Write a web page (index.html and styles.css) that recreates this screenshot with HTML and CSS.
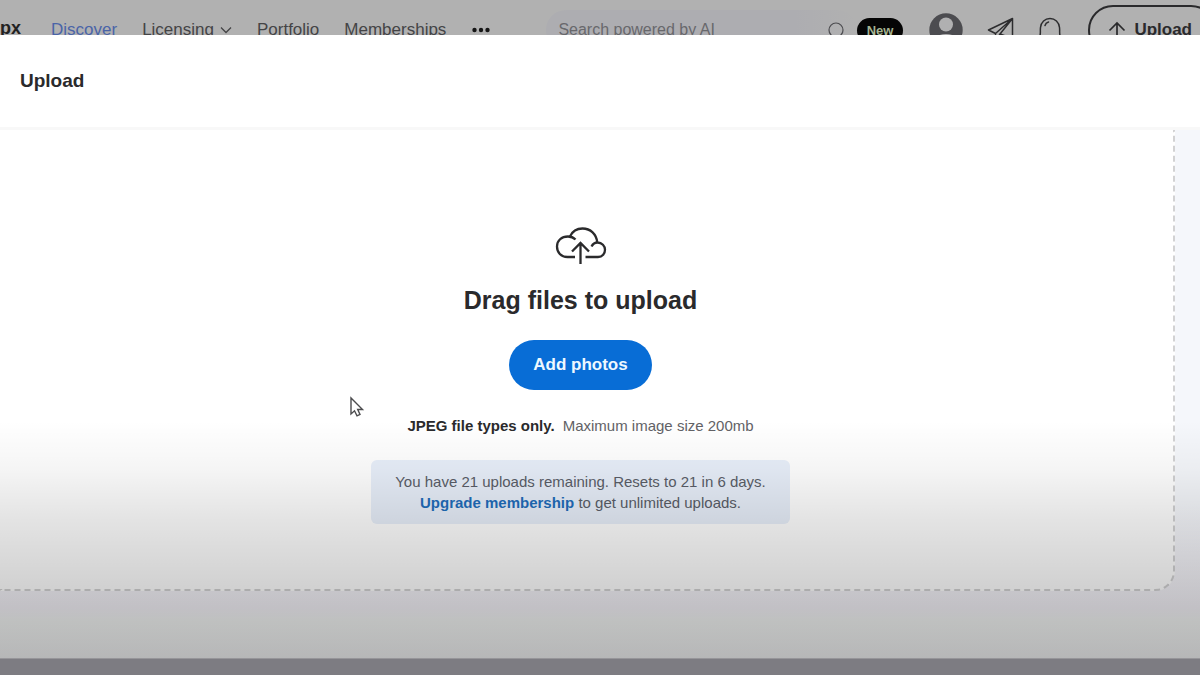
FILE: index.html
```html
<!DOCTYPE html>
<html lang="en">
<head>
<meta charset="utf-8">
<title>Upload</title>
<link rel="stylesheet" href="styles.css">
</head>
<body>
<div class="page">
  <header class="topbar">
    <div class="topbar-row">
      <a class="logo" href="#">px</a>
      <nav class="nav">
        <a class="nav-link nav-link-active" href="#">Discover</a>
        <a class="nav-link nav-link-menu" href="#">Licensing
          <svg width="12" height="8" viewBox="0 0 12 8" fill="none" stroke="currentColor" stroke-width="1.3"><path d="M1 1.500l5 5 5-5"/></svg>
        </a>
        <a class="nav-link" href="#">Portfolio</a>
        <a class="nav-link" href="#">Memberships</a>
      </nav>
      <button class="icon-button more" type="button" aria-label="More">
        <svg width="18" height="6" viewBox="0 0 18 6" fill="#161616"><circle cx="2.500" cy="3" r="2.200"/><circle cx="9" cy="3" r="2.200"/><circle cx="15.500" cy="3" r="2.200"/></svg>
      </button>
      <form class="search">
        <input class="search-input" type="search" placeholder="Search powered by AI" aria-label="Search">
        <svg width="17" height="20" viewBox="0 0 17 20" fill="none" stroke="#4c4c50" stroke-width="1.200"><circle cx="8" cy="10" r="7"/><path d="M12.500 15.500l3.500 4"/></svg>
      </form>
      <span class="badge">New</span>
      <button class="icon-button" type="button" aria-label="Profile">
        <svg width="34" height="34" viewBox="0 0 34 34"><circle cx="17" cy="17" r="16.700" fill="#4c4c50"/><circle cx="17" cy="11.500" r="7" fill="#b0b0b1"/><path d="M6 27a11 6 0 0 1 22 0a16 16 0 0 1-22 0z" fill="#b0b0b1"/></svg>
      </button>
      <button class="icon-button" type="button" aria-label="Messages">
        <svg width="27" height="26" viewBox="0 0 27 26" fill="none" stroke="#2c2c2e" stroke-width="1.500" stroke-linejoin="round"><path d="M25.500 1.500L1.500 13l7 3.500L25.500 1.500v20L13 17M8.500 16.500v8l4.500-7.500L25.500 1.500"/></svg>
      </button>
      <button class="icon-button" type="button" aria-label="Notifications">
        <svg width="24" height="26" viewBox="0 0 24 26" fill="none" stroke="#2c2c2e" stroke-width="1.500" stroke-linecap="round"><path d="M1.500 20c1.500-3 .5-6 1-9.500C3 5 7 1.500 12 1.500S21 5 21.500 10.500c.5 3.500-.5 6.500 1 9.500zM7 8.500c.5-2 1.500-3 3.500-3.500"/></svg>
      </button>
      <button class="upload-button" type="button">
        <svg width="18" height="18" viewBox="0 0 18 18" fill="none" stroke="currentColor" stroke-width="1.700"><path d="M9 18V2M1.500 9.500L9 2l7.500 7.500"/></svg>
        Upload
      </button>
    </div>
  </header>

  <main class="dialog">
    <div class="dialog-header"><h1 class="dialog-title">Upload</h1></div>
    <div class="dialog-body">
      <section class="dropzone">
        <svg class="cloud" width="52" height="40" viewBox="0 0 52 40" fill="none" stroke="#2a2a2c" stroke-width="2.300"><path d="M20 31h-7.500C6 31 2 26.500 2 20.500S6.500 10.500 13 10.500c3 0 5.500 1 7.500 3M15 10.500C17.500 5 22 2.500 27.500 2.500c8 0 14 5.500 14.800 14M36.500 20.500c1.300-2.500 3.300-4 6-4 4.500 0 7.500 3.500 7.500 7.200S47.500 31 43 31H30.500M25.500 38V17M17 25.500l8.500-8.500 8.500 8.500"/></svg>
        <h2 class="dropzone-title">Drag files to upload</h2>
        <button class="add-button" type="button">Add photos</button>
        <p class="hint"><strong class="hint-types">JPEG file types only.</strong><span>Maximum image size 200mb</span></p>
        <p class="notice">You have 21 uploads remaining. Resets to 21 in 6 days.<br><a class="notice-link" href="#">Upgrade membership</a> to get unlimited uploads.</p>
      </section>
    </div>
    <div class="shade"></div>
  </main>
  <div class="backdrop-edge"></div>
  <svg class="pointer" width="16" height="22" viewBox="0 0 16 22" fill="#fff" stroke="#4c4c4e" stroke-width="1.400"><path d="M2 2v16l3.500-3.200 2.500 5 3-1.400-2.300-4.900h4.800z"/></svg>
</div>
</body>
</html>
```
FILE: styles.css
```css
* { box-sizing: border-box; }

body {
  margin: 0;
  font-family: "Liberation Sans", Arial, sans-serif;
  color: #2a2a2c;
}

h1, h2, p { margin: 0; }

a { text-decoration: none; color: inherit; }

button { font-family: inherit; cursor: pointer; }

.page {
  position: relative;
  display: flex;
  flex-direction: column;
  min-height: 100vh;
  overflow: hidden;
}

.topbar {
  height: 35px;
  overflow: hidden;
  background: #b1b1b1;
}

.topbar-row {
  display: flex;
  align-items: center;
  height: 60px;
}

.logo {
  width: 51px;
  font-size: 18px;
  font-weight: bold;
  line-height: 24px;
  padding-bottom: 4px;
  color: #222;
}

.nav {
  display: flex;
  gap: 25px;
  font-size: 17px;
  color: #444446;
}

.nav-link-active { color: #4a64a8; }

.nav-link-menu {
  display: flex;
  align-items: center;
  gap: 6px;
}

.icon-button {
  display: flex;
  padding: 0;
  border: 0;
  background: none;
  margin-left: 24px;
}

.more { margin: 0 56px 0 26px; }

.search {
  display: flex;
  flex: 1;
  align-items: center;
  height: 40px;
  padding: 0 12px;
  border-radius: 20px;
  background: linear-gradient(90deg, #adadb1 80%, #b1b1b1);
}

.search-input {
  flex: 1;
  min-width: 0;
  padding: 0;
  border: 0;
  outline: 0;
  background: none;
  font: 16px "Liberation Sans", Arial, sans-serif;
}

.search-input::placeholder { color: #68686c; opacity: 1; }

.badge {
  margin-right: 2px;
  padding: 0 10px;
  border-radius: 13px;
  background: #050505;
  color: #a5b592;
  font-size: 13px;
  font-weight: bold;
  line-height: 25px;
}

.upload-button {
  display: flex;
  flex: none;
  align-items: center;
  gap: 8px;
  height: 50px;
  margin: 0 -16px 0 26px;
  padding: 0 22px 0 18px;
  border: 2px solid #2a2a2c;
  border-radius: 25px;
  background: none;
  color: #2a2a2c;
  font-size: 17px;
  font-weight: bold;
}

.dialog {
  position: relative;
  display: flex;
  flex: 1;
  flex-direction: column;
  background: linear-gradient(#f5f7fb 75%, #f3f1f7 92%, #f4f6f5 94%, #f6f7f8);
}

.dialog-header {
  padding: 34px 20px;
  background: #fff;
  border-bottom: 3px solid #f8f8f8;
}

.dialog-title {
  font-size: 19px;
  line-height: 24px;
}

.dialog-body {
  display: flex;
  flex: 1;
  padding: 0 25px 67px 0;
}

.dropzone {
  display: flex;
  flex: 1;
  flex-direction: column;
  align-items: center;
  padding: 96px 12px 60px 0;
  border: 2px dashed #d2d2d3;
  border-width: 0 2px 2px 0;
  border-bottom-right-radius: 20px;
  background: #fff;
}

.cloud { display: block; }

.dropzone-title {
  margin-top: 18px;
  font-size: 25px;
  line-height: 32px;
}

.add-button {
  height: 50px;
  margin-top: 24px;
  padding: 0 24px;
  border: 0;
  border-radius: 25px;
  background: #086dd6;
  color: #eef8ff;
  font-size: 17px;
  font-weight: bold;
}

.hint {
  display: flex;
  flex-wrap: wrap;
  justify-content: center;
  gap: 8px;
  margin-top: 25px;
  color: #626266;
  font-size: 15px;
  line-height: 21px;
}

.hint-types { color: #2a2a2c; }

.notice {
  margin-top: 24px;
  padding: 11px 24px;
  border-radius: 6px;
  background: #e8effa;
  color: #5a5e68;
  font-size: 15px;
  line-height: 21px;
  text-align: center;
}

.notice-link {
  color: #1f6dbb;
  font-weight: bold;
}

.shade {
  position: absolute;
  inset: 62% 0 0;
  background: linear-gradient(rgba(0, 0, 0, 0), rgba(0, 0, 0, 0.04) 20%, rgba(0, 0, 0, 0.11) 42%, rgba(0, 0, 0, 0.18) 70%, rgba(0, 0, 0, 0.26));
  pointer-events: none;
}

.backdrop-edge {
  height: 17px;
  background: #7d7c82;
  border-top: 1px solid #969599;
}

.pointer {
  position: absolute;
  left: 349px;
  top: 396px;
  pointer-events: none;
}
```
